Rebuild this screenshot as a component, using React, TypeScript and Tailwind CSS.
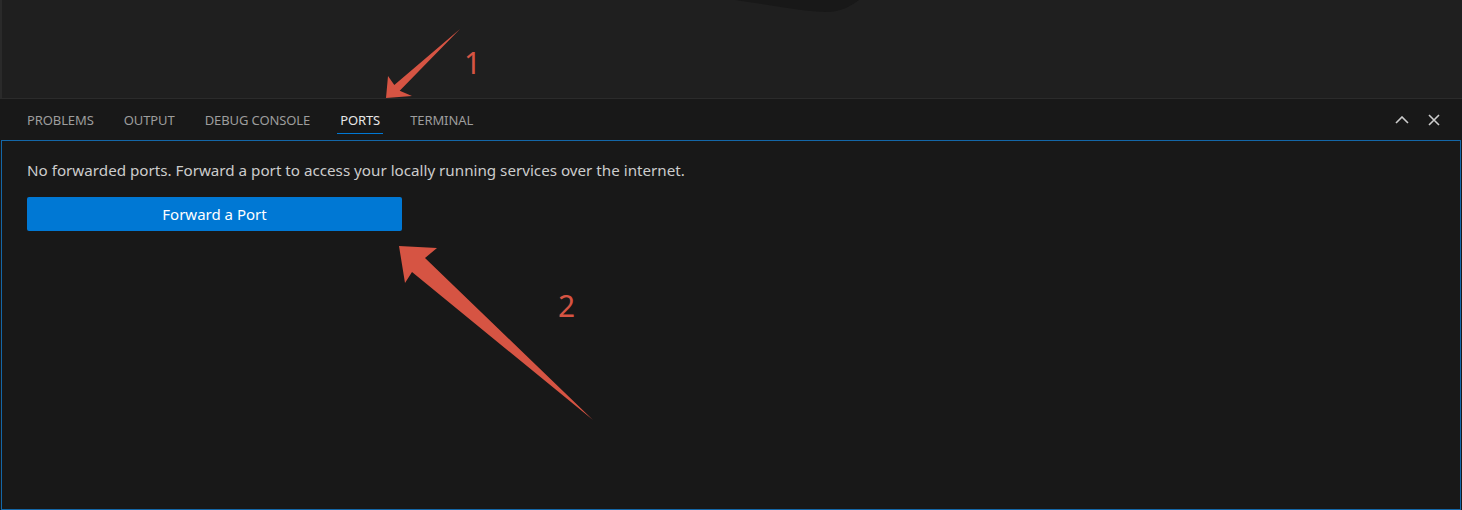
import React from "react";

const TABS = ["PROBLEMS", "OUTPUT", "DEBUG CONSOLE", "PORTS", "TERMINAL"];
const ACTIVE = "PORTS";

export default function App() {
  return (
    <div
      className="relative w-full h-[510px] overflow-hidden bg-[#181818] flex flex-col"
      style={{ fontFamily: '"Noto Sans", "Open Sans", sans-serif' }}
    >
      {/* editor area above the panel */}
      <div className="relative h-[98px] shrink-0 bg-[#1f1f1f] border-l-2 border-[#2a2a2a]">
        <svg className="absolute left-[730px] top-0" width="130" height="14" viewBox="0 0 130 14">
          <path d="M3 0 C 40 5, 72 12, 95 12 C 110 12, 120 5, 127 0 Z" fill="#181818" />
        </svg>
      </div>

      {/* panel */}
      <div className="flex-1 flex flex-col border-t border-[#2b2b2b]">
        <div className="h-[41px] shrink-0 flex items-center pl-[27px] pr-[22px]">
          <div className="flex items-center gap-[30px]">
            {TABS.map((t) => (
              <div key={t} className="relative h-[41px] flex items-center pt-[2px]">
                <span
                  className={
                    "text-[13px] tracking-[-0.1px] " +
                    (t === ACTIVE ? "text-[#e7e7e7]" : "text-[#9d9d9d]")
                  }
                >
                  {t}
                </span>
                {t === ACTIVE && (
                  <div className="absolute left-[-3px] right-[-3px] top-[34px] h-[1px] bg-[#0078d4]" />
                )}
              </div>
            ))}
          </div>
          <div className="ml-auto flex items-center gap-[19px]">
            <svg width="14" height="8" viewBox="0 0 14 8" fill="none">
              <polyline points="1,7 7,1 13,7" stroke="#cccccc" strokeWidth="1.6" />
            </svg>
            <svg width="12" height="12" viewBox="0 0 12 12" fill="none">
              <path d="M1 1 L11 11 M11 1 L1 11" stroke="#cccccc" strokeWidth="1.6" />
            </svg>
          </div>
        </div>

        <div className="flex-1 ml-[1px] mr-[1px] border border-[#1467a8] pl-[25px] pt-[19px]">
          <p className="text-[15.2px] text-[#cccccc] leading-[20px]">
            No forwarded ports. Forward a port to access your locally running services over the internet.
          </p>
          <button className="mt-[17px] w-[375px] h-[34px] rounded-[2px] bg-[#0078d4] text-white text-[15px]">
            Forward a Port
          </button>
        </div>
      </div>

      {/* annotations */}
      <svg className="absolute inset-0 pointer-events-none" width="1462" height="510">
        <polygon
          points="386,98 388,76 394.3,84.9 460,29 399.7,90.7 412,96"
          fill="#d65443"
        />
        <polygon
          points="399,246 437,248 425,258 593,420 412,272 405,283"
          fill="#d65443"
        />
        <text x="464" y="74" fill="#d65443" fontSize="30" fontFamily='"Noto Sans", sans-serif'>
          1
        </text>
        <text x="558" y="317" fill="#d65443" fontSize="30" fontFamily='"Noto Sans", sans-serif'>
          2
        </text>
      </svg>
    </div>
  );
}
